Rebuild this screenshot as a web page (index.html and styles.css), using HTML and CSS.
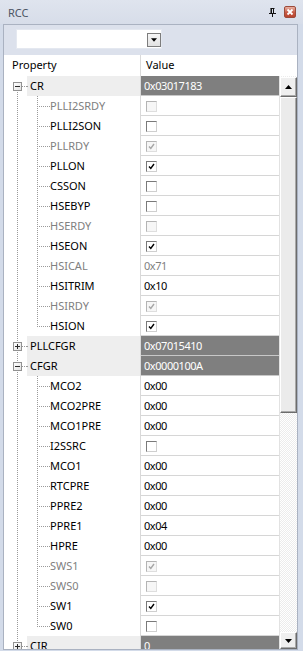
FILE: index.html
```html
<!DOCTYPE html>
<html>
<head>
<meta charset="utf-8">
<link rel="stylesheet" href="styles.css">
</head>
<body>
<div class="window">
  <div class="titlebar">
    <span class="title">RCC</span>
    <span class="tb-icons">
      <svg class="pin" width="7" height="9" viewBox="0 0 7 9"><path d="M1.5 0.5h4M2 0.5v4.5M4.5 0.5v4.5M0 5.5h7M3.5 5.5v3.5" stroke="#111" stroke-width="1" fill="none"/><rect x="2" y="0" width="1" height="5" fill="#111"/></svg>
      <span class="close"><svg width="10" height="10" viewBox="0 0 10 10"><path d="M2.5 2.5l5 5M7.5 2.5l-5 5" stroke="#fff" stroke-width="1.8"/></svg></span>
    </span>
  </div>
  <div class="panel">
    <div class="toolbar">
      <div class="combo"><span class="combo-btn"><svg width="7" height="4" viewBox="0 0 7 4"><path d="M0 0h7L3.5 4z" fill="#000"/></svg></span></div>
    </div>
    <div class="header"><div class="h-name">Property</div><div class="h-val">Value</div></div>
    <div class="body">
      <div class="rows">
        <div class="row group first"><div class="name"><span class="t1"><i class="box minus"></i></span><span class="lbl">CR</span></div><div class="val hex">0x03017183</div></div>
        <div class="row"><div class="name"><span class="t1"></span><span class="t2"></span><span class="lbl dis">PLLI2SRDY</span></div><div class="val"><i class="cb dis"></i></div></div>
        <div class="row"><div class="name"><span class="t1"></span><span class="t2"></span><span class="lbl">PLLI2SON</span></div><div class="val"><i class="cb"></i></div></div>
        <div class="row"><div class="name"><span class="t1"></span><span class="t2"></span><span class="lbl dis">PLLRDY</span></div><div class="val"><i class="cb dis on"><svg width="9" height="9" viewBox="0 0 9 9"><path d="M2 4.5l1.8 2L7 2"/></svg></i></div></div>
        <div class="row"><div class="name"><span class="t1"></span><span class="t2"></span><span class="lbl">PLLON</span></div><div class="val"><i class="cb on"><svg width="9" height="9" viewBox="0 0 9 9"><path d="M2 4.5l1.8 2L7 2"/></svg></i></div></div>
        <div class="row"><div class="name"><span class="t1"></span><span class="t2"></span><span class="lbl">CSSON</span></div><div class="val"><i class="cb"></i></div></div>
        <div class="row"><div class="name"><span class="t1"></span><span class="t2"></span><span class="lbl">HSEBYP</span></div><div class="val"><i class="cb"></i></div></div>
        <div class="row"><div class="name"><span class="t1"></span><span class="t2"></span><span class="lbl dis">HSERDY</span></div><div class="val"><i class="cb dis"></i></div></div>
        <div class="row"><div class="name"><span class="t1"></span><span class="t2"></span><span class="lbl">HSEON</span></div><div class="val"><i class="cb on"><svg width="9" height="9" viewBox="0 0 9 9"><path d="M2 4.5l1.8 2L7 2"/></svg></i></div></div>
        <div class="row"><div class="name"><span class="t1"></span><span class="t2"></span><span class="lbl dis">HSICAL</span></div><div class="val hex dis">0x71</div></div>
        <div class="row"><div class="name"><span class="t1"></span><span class="t2"></span><span class="lbl">HSITRIM</span></div><div class="val hex">0x10</div></div>
        <div class="row"><div class="name"><span class="t1"></span><span class="t2"></span><span class="lbl dis">HSIRDY</span></div><div class="val"><i class="cb dis on"><svg width="9" height="9" viewBox="0 0 9 9"><path d="M2 4.5l1.8 2L7 2"/></svg></i></div></div>
        <div class="row last"><div class="name"><span class="t1"></span><span class="t2"></span><span class="lbl">HSION</span></div><div class="val"><i class="cb on"><svg width="9" height="9" viewBox="0 0 9 9"><path d="M2 4.5l1.8 2L7 2"/></svg></i></div></div>
        <div class="row group"><div class="name"><span class="t1"><i class="box plus"></i></span><span class="lbl">PLLCFGR</span></div><div class="val hex">0x07015410</div></div>
        <div class="row group"><div class="name"><span class="t1"><i class="box minus"></i></span><span class="lbl">CFGR</span></div><div class="val hex">0x0000100A</div></div>
        <div class="row"><div class="name"><span class="t1"></span><span class="t2"></span><span class="lbl">MCO2</span></div><div class="val hex">0x00</div></div>
        <div class="row"><div class="name"><span class="t1"></span><span class="t2"></span><span class="lbl">MCO2PRE</span></div><div class="val hex">0x00</div></div>
        <div class="row"><div class="name"><span class="t1"></span><span class="t2"></span><span class="lbl">MCO1PRE</span></div><div class="val hex">0x00</div></div>
        <div class="row"><div class="name"><span class="t1"></span><span class="t2"></span><span class="lbl">I2SSRC</span></div><div class="val"><i class="cb"></i></div></div>
        <div class="row"><div class="name"><span class="t1"></span><span class="t2"></span><span class="lbl">MCO1</span></div><div class="val hex">0x00</div></div>
        <div class="row"><div class="name"><span class="t1"></span><span class="t2"></span><span class="lbl">RTCPRE</span></div><div class="val hex">0x00</div></div>
        <div class="row"><div class="name"><span class="t1"></span><span class="t2"></span><span class="lbl">PPRE2</span></div><div class="val hex">0x00</div></div>
        <div class="row"><div class="name"><span class="t1"></span><span class="t2"></span><span class="lbl">PPRE1</span></div><div class="val hex">0x04</div></div>
        <div class="row"><div class="name"><span class="t1"></span><span class="t2"></span><span class="lbl">HPRE</span></div><div class="val hex">0x00</div></div>
        <div class="row"><div class="name"><span class="t1"></span><span class="t2"></span><span class="lbl dis">SWS1</span></div><div class="val"><i class="cb dis on"><svg width="9" height="9" viewBox="0 0 9 9"><path d="M2 4.5l1.8 2L7 2"/></svg></i></div></div>
        <div class="row"><div class="name"><span class="t1"></span><span class="t2"></span><span class="lbl dis">SWS0</span></div><div class="val"><i class="cb dis"></i></div></div>
        <div class="row"><div class="name"><span class="t1"></span><span class="t2"></span><span class="lbl">SW1</span></div><div class="val"><i class="cb on"><svg width="9" height="9" viewBox="0 0 9 9"><path d="M2 4.5l1.8 2L7 2"/></svg></i></div></div>
        <div class="row last"><div class="name"><span class="t1"></span><span class="t2"></span><span class="lbl">SW0</span></div><div class="val"><i class="cb"></i></div></div>
        <div class="row group"><div class="name"><span class="t1"><i class="box plus"></i></span><span class="lbl">CIR</span></div><div class="val hex">0</div></div>
      </div>
      <div class="scrollbar">
        <div class="sb-btn up"><svg width="7" height="4" viewBox="0 0 7 4"><path d="M3.5 0L7 4H0z" fill="#000"/></svg></div>
        <div class="sb-thumb"></div>
        <div class="sb-track"></div>
        <div class="sb-btn down"><svg width="7" height="4" viewBox="0 0 7 4"><path d="M0 0h7L3.5 4z" fill="#000"/></svg></div>
      </div>
    </div>
  </div>
</div>
</body>
</html>
```

FILE: styles.css
```css
* { box-sizing: border-box; margin: 0; padding: 0; }
html, body { width: 303px; height: 651px; overflow: hidden; }
body {
  background: #d3dbe9;
  font-family: "Noto Sans", "Open Sans", sans-serif;
  font-size: 11px;
  color: #000;
}
i { font-style: normal; }

.window { width: 303px; height: 651px; display: flex; flex-direction: column; }

.titlebar {
  height: 24px;
  flex: none;
  display: flex;
  align-items: center;
  justify-content: space-between;
  padding: 0 7px 0 8px;
  background: linear-gradient(#dfe4ee, #d7dde9);
}
.title { color: #4d5665; line-height: 24px; padding-top: 1px; }
.tb-icons { display: flex; align-items: center; gap: 8px; }
.pin { display: block; margin-top: 1px; }
.close {
  width: 12px; height: 12px;
  display: flex; align-items: center; justify-content: center;
  border: 1px solid #9c4a3a;
  border-radius: 2px;
  background: linear-gradient(#e9b1a2, #c75a45 55%, #b9442f);
}
.close svg { display: block; }

.panel {
  margin: 0 5px 0 3px;
  height: 626px;
  flex: none;
  border: 1px solid #aab2c1;
  display: flex;
  flex-direction: column;
  background: #fff;
}

.toolbar {
  height: 30px;
  flex: none;
  background: #dce1ec;
  padding: 4px 0 0 12px;
}
.combo {
  width: 146px; height: 20px;
  background: #fff;
  border: 1px solid #e4e8f0;
  display: flex;
  justify-content: flex-end;
  align-items: flex-start;
  padding-top: 3px;
}
.combo-btn {
  width: 14px; height: 14px;
  border: 1px solid #7d7d7d;
  background: linear-gradient(#f6f6f6, #e2e2e2);
  display: flex; align-items: center; justify-content: center;
}
.combo-btn svg { display: block; width: 6px; height: 4px; }

.header {
  height: 21px;
  flex: none;
  display: flex;
  background: #fff;
  line-height: 19px;
}
.h-name { width: 137px; padding-left: 8px; border-right: 1px solid #dadada; }
.h-val { padding-left: 5px; }

.body { height: 573px; flex: none; display: flex; }
.rows { width: 275px; flex: none; overflow: hidden; background: #fff; }

.row { height: 20px; display: flex; }
.name {
  width: 137px; flex: none;
  display: flex;
  border-right: 1px solid #d9d9d9;
}
.val {
  width: 138px; flex: none;
  height: 20px;
  border-bottom: 1px solid #d6d6d6;
  padding: 1px 0 0 3px;
  line-height: 18px;
  white-space: nowrap;
}
.hex { letter-spacing: -0.45px; }
.val.dis { color: #7f7f7f; }

.lbl { line-height: 20px; white-space: nowrap; }
.lbl.dis { color: #808080; }

.t1 {
  width: 23px; flex: none;
  background-image: repeating-linear-gradient(to bottom, #9a9a9a 0 1px, transparent 1px 2px);
  background-size: 1px 100%;
  background-position: 13px 0;
  background-repeat: no-repeat;
}
.t2 {
  width: 23px; flex: none;
  background-image:
    repeating-linear-gradient(to bottom, #9a9a9a 0 1px, transparent 1px 2px),
    repeating-linear-gradient(to right, #9a9a9a 0 1px, transparent 1px 2px);
  background-size: 1px 100%, 13px 1px;
  background-position: 10px 0, 10px 10px;
  background-repeat: no-repeat;
}
.last .t2 { background-size: 1px 10px, 13px 1px; }

.group .t1 {
  background-image:
    repeating-linear-gradient(to bottom, #9a9a9a 0 1px, transparent 1px 2px),
    repeating-linear-gradient(to right, #9a9a9a 0 1px, transparent 1px 2px);
  background-size: 1px 100%, 5px 1px;
  background-position: 13px 0, 18px 10px;
}
.group.first .t1 {
  background-size: 1px 10px, 5px 1px;
  background-position: 13px 10px, 18px 10px;
}
.group .lbl {
  flex: 1;
  padding-left: 3px;
  background:
    repeating-linear-gradient(to right, #9a9a9a 0 1px, transparent 1px 2px) 0 10px / 2px 1px no-repeat,
    #eeeeee;
}
.group .val { background: #7f7f7f; color: #fff; border-bottom-color: #c8c8c8; }

.box {
  display: block;
  position: relative;
  width: 9px; height: 9px;
  margin: 6px 0 0 9px;
  border: 1px solid #929292;
  background: linear-gradient(135deg, #ffffff, #e2e2e2);
}
.box::before {
  content: "";
  position: absolute;
  left: 1px; top: 3px;
  width: 5px; height: 1px;
  background: #2a2a2a;
}
.box.plus::after {
  content: "";
  position: absolute;
  left: 3px; top: 1px;
  width: 1px; height: 5px;
  background: #2a2a2a;
}

.cb {
  display: block;
  width: 11px; height: 11px;
  margin: 4px 0 0 2px;
  border: 1px solid;
  border-color: #7a7a7a #cfcfcf #cfcfcf #7a7a7a;
  background: #fff;
}
.cb svg { display: block; }
.cb path { fill: none; stroke: #000; stroke-width: 1.4; }
.cb.dis { border-color: #b4b4b4 #dedede #dedede #b4b4b4; background: #f6f6f6; }
.cb.dis path { stroke: #a6a6a6; }

.scrollbar {
  width: 18px; flex: none;
  display: flex; flex-direction: column;
  padding-top: 1px;
  border-left: 1px solid #e2e2e2;
  background: repeating-conic-gradient(#ececec 0 25%, #ffffff 0 50%) 0 0 / 2px 2px;
}
.sb-btn {
  flex: none;
  background: #efefef;
  border: 1px solid;
  border-color: #ffffff #6c6c6c #6c6c6c #ffffff;
  box-shadow: inset -1px -1px #a9a9a9;
  display: flex; align-items: center; justify-content: center;
}
.sb-btn svg { display: block; }
.sb-btn.up { height: 20px; }
.sb-btn.down { height: 17px; }
.sb-thumb {
  height: 316px; flex: none;
  background: #ebebeb;
  border: 1px solid;
  border-color: #ffffff #6c6c6c #6c6c6c #ffffff;
  box-shadow: inset -1px -1px #a9a9a9;
}
.sb-track { flex: 1; }
```
